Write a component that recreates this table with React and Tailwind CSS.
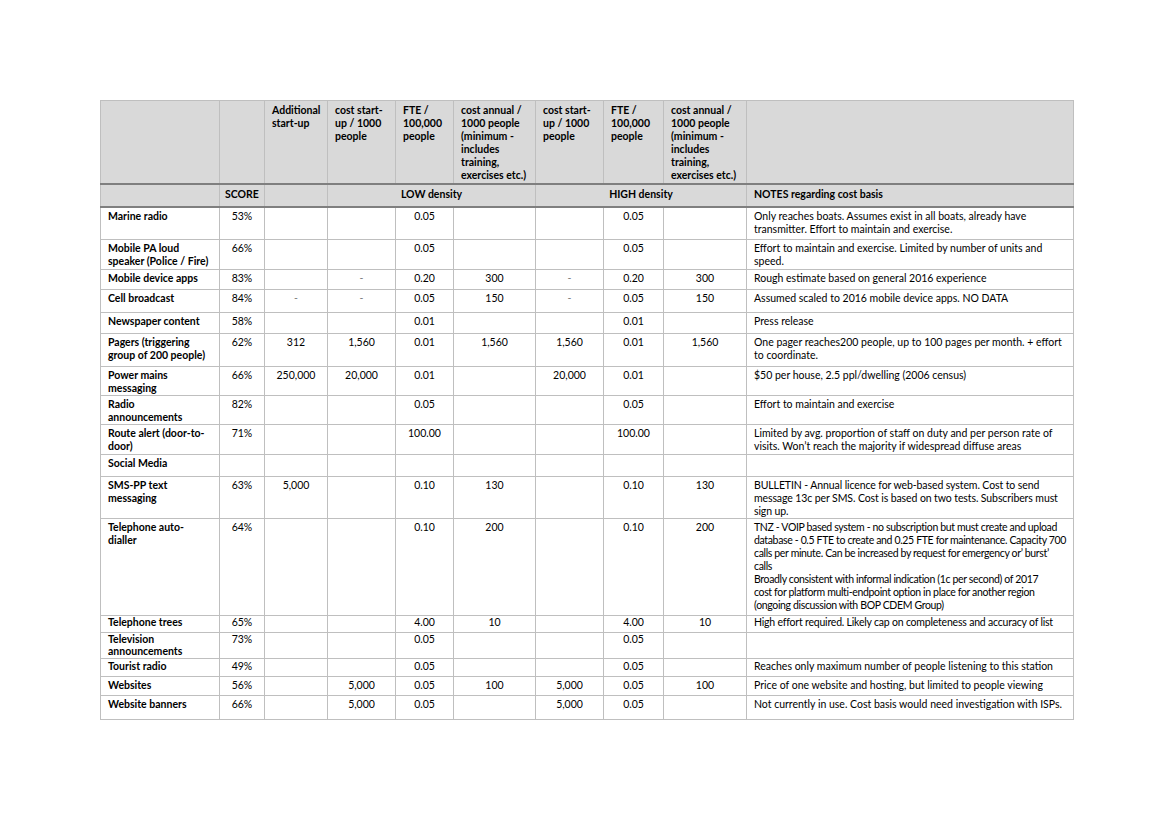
import React from 'react';

// column widths taken from the printed table
const cols = [119, 45, 63, 68, 58, 82, 68, 60, 83, 327];

const costHead = ['cost annual /', '1000 people', '(minimum -', 'includes', 'training,', 'exercises etc.)'];

const headRow = [
  [],
  [],
  ['Additional', 'start-up'],
  ['cost start-', 'up / 1000', 'people'],
  ['FTE /', '100,000', 'people'],
  costHead,
  ['cost start-', 'up / 1000', 'people'],
  ['FTE /', '100,000', 'people'],
  costHead,
  [],
];

const rows = [
  { name: ['Marine radio'], h: 'h-[33px]', v: ['53%', '', '', '0.05', '', '', '0.05', ''], notes: ['Only reaches boats. Assumes exist in all boats, already have', 'transmitter. Effort to maintain and exercise.'] },
  { name: ['Mobile PA loud', 'speaker (Police / Fire)'], h: 'h-[30px]', v: ['66%', '', '', '0.05', '', '', '0.05', ''], notes: ['Effort to maintain and exercise. Limited by number of units and', 'speed.'] },
  { name: ['Mobile device apps'], h: 'h-[20px]', v: ['83%', '', '-', '0.20', '300', '-', '0.20', '300'], notes: ['Rough estimate based on general 2016 experience'] },
  { name: ['Cell broadcast'], h: 'h-[23px]', v: ['84%', '-', '-', '0.05', '150', '-', '0.05', '150'], notes: ['Assumed scaled to 2016 mobile device apps. NO DATA'] },
  { name: ['Newspaper content'], h: 'h-[21px]', v: ['58%', '', '', '0.01', '', '', '0.01', ''], notes: ['Press release'] },
  { name: ['Pagers (triggering', 'group of 200 people)'], h: 'h-[33px]', v: ['62%', '312', '1,560', '0.01', '1,560', '1,560', '0.01', '1,560'], notes: ['One pager reaches200 people, up to 100 pages per month. + effort', 'to coordinate.'] },
  { name: ['Power mains', 'messaging'], h: 'h-[28px]', v: ['66%', '250,000', '20,000', '0.01', '', '20,000', '0.01', ''], notes: ['$50 per house, 2.5 ppl/dwelling (2006 census)'] },
  { name: ['Radio', 'announcements'], h: 'h-[28px]', v: ['82%', '', '', '0.05', '', '', '0.05', ''], notes: ['Effort to maintain and exercise'] },
  { name: ['Route alert (door-to-', 'door)'], h: 'h-[30px]', v: ['71%', '', '', '100.00', '', '', '100.00', ''], notes: ['Limited by avg. proportion of staff on duty and per person rate of', "visits. Won\u2019t reach the majority if widespread diffuse areas"] },
  { name: ['Social Media'], h: 'h-[22px]', v: ['', '', '', '', '', '', '', ''], notes: [] },
  { name: ['SMS-PP text', 'messaging'], h: 'h-[41px]', v: ['63%', '5,000', '', '0.10', '130', '', '0.10', '130'], notes: ['BULLETIN - Annual licence for web-based system. Cost to send', 'message 13c per SMS. Cost is based on two tests. Subscribers must', 'sign up.'], tight: 'tracking-[-0.1px]' },
  {
    name: ['Telephone auto-', 'dialler'], h: 'h-[97px]', v: ['64%', '', '', '0.10', '200', '', '0.10', '200'],
    notes: [
      'TNZ - VOIP based system - no subscription but must create and upload',
      'database - 0.5 FTE to create and 0.25 FTE for maintenance. Capacity 700',
      "calls per minute. Can be increased by request for emergency or\u2019 burst\u2019",
      'calls',
      'Broadly consistent with informal indication (1c per second) of 2017',
      'cost for platform multi-endpoint option in place for another region',
      '(ongoing discussion with BOP CDEM Group)',
    ],
    tight: 'tracking-[-0.35px]',
  },
  // these two rows are printed tighter than the rest
  { name: ['Telephone trees'], h: 'h-[17px]', pad: 'pt-0 leading-[12px]', v: ['65%', '', '', '4.00', '10', '', '4.00', '10'], notes: ['High effort required. Likely cap on completeness and accuracy of list'], tight: 'tracking-[-0.2px]' },
  { name: ['Television', 'announcements'], h: 'h-[26px]', pad: 'pt-0 leading-[12px]', v: ['73%', '', '', '0.05', '', '', '0.05', ''], notes: [] },
  { name: ['Tourist radio'], h: 'h-[18px]', pad: 'pt-[1px]', v: ['49%', '', '', '0.05', '', '', '0.05', ''], notes: ['Reaches only maximum number of people listening to this station'] },
  { name: ['Websites'], h: 'h-[19px]', pad: 'pt-[2px]', v: ['56%', '', '5,000', '0.05', '100', '5,000', '0.05', '100'], notes: ['Price of one website and hosting, but limited to people viewing'] },
  { name: ['Website banners'], h: 'h-[24px]', v: ['66%', '', '5,000', '0.05', '', '5,000', '0.05', ''], notes: ['Not currently in use. Cost basis would need investigation with ISPs.'] },
];

const Lines = ({ lines }) =>
  lines.map((l, i) => (
    <React.Fragment key={i}>
      {i > 0 && <br />}
      {l}
    </React.Fragment>
  ));

const cell = 'border border-[#bfbfbf] align-top px-[7px]';
const head = 'border border-[#bfbfbf] border-b-2 border-b-[#7f7f7f] bg-[#d9d9d9] align-top font-bold';

export default function App() {
  return (
    <div className="min-h-[831px] bg-white pt-[100px] pl-[100px] text-black" style={{ fontFamily: 'Lato, "Noto Sans", sans-serif' }}>
      <table className="table-fixed border-collapse w-[973px] text-[10.5px] leading-[13px]">
        <colgroup>
          {cols.map((w, i) => (
            <col key={i} style={{ width: w }} />
          ))}
        </colgroup>
        <thead>
          {/* column headings */}
          <tr className="h-[83px]">
            {headRow.map((h, i) => (
              <th key={i} className={`${head} text-left pt-[3px] px-[7px]`}>
                <Lines lines={h} />
              </th>
            ))}
          </tr>
          {/* density groups */}
          <tr className="h-[23px]">
            <th className={`${head} pt-[3px]`}></th>
            <th className={`${head} pt-[3px] text-center`}>SCORE</th>
            <th className={`${head} pt-[3px]`}></th>
            <th colSpan={3} className={`${head} pt-[3px] text-center`}>LOW density</th>
            <th colSpan={3} className={`${head} pt-[3px] text-center`}>HIGH density</th>
            <th className={`${head} pt-[3px] px-[7px] text-left`}>NOTES regarding cost basis</th>
          </tr>
        </thead>
        <tbody>
          {rows.map((r) => {
            const pad = r.pad || 'pt-[2px]';
            return (
              <tr key={r.name.join(' ')} className={r.h}>
                <td className={`${cell} ${pad} font-bold text-left`}>
                  <Lines lines={r.name} />
                </td>
                {r.v.map((val, i) => (
                  <td key={i} className={`${cell} ${pad} text-center ${val === '-' ? 'text-[#808080]' : ''}`}>
                    {val}
                  </td>
                ))}
                <td className={`${cell} ${pad} text-left whitespace-nowrap ${r.tight || ''}`}>
                  <Lines lines={r.notes} />
                </td>
              </tr>
            );
          })}
        </tbody>
      </table>
    </div>
  );
}
